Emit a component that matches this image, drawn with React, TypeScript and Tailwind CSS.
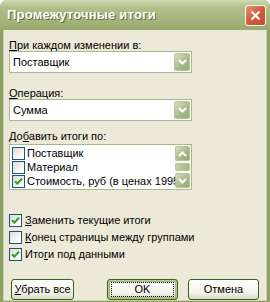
import React from 'react';

const font = "font-['Liberation_Sans',Arial,sans-serif]";

function Tick() {
  return (
    <svg width="9" height="9" viewBox="0 0 9 9" className="block">
      <path d="M1 4.2 L3.4 6.6 L8 1.6" fill="none" stroke="#21a121" strokeWidth="2" />
    </svg>
  );
}

function CheckBox({ checked }: { checked?: boolean }) {
  return (
    <div className="w-[13px] h-[13px] shrink-0 border border-[#1c5180] bg-[linear-gradient(135deg,#dcdad2,#f6f5f0_60%,#ffffff)] flex items-center justify-center">
      {checked && <Tick />}
    </div>
  );
}

function Chevron({ up }: { up?: boolean }) {
  return (
    <svg width="9" height="6" viewBox="0 0 9 6" className="block">
      <path
        d={up ? 'M1 5 L4.5 1.5 L8 5' : 'M1 1 L4.5 4.5 L8 1'}
        fill="none"
        stroke="#ffffff"
        strokeWidth="2"
      />
    </svg>
  );
}

function OliveButton({ up, className }: { up?: boolean; className: string }) {
  return (
    <div
      className={
        'flex items-center justify-center rounded-[2px] border border-[#b5c49a] bg-[linear-gradient(135deg,#d3dcbd,#a9b98a_60%,#93a672)] ' +
        className
      }
    >
      <Chevron up={up} />
    </div>
  );
}

function Combo({ value }: { value: string }) {
  return (
    <div className="w-[183px] h-[22px] border border-[#a6b98c] bg-white flex items-center pl-[3px] pr-[1px]">
      <span className="flex-1 text-[11px] text-black">{value}</span>
      <OliveButton className="w-[16px] h-[18px]" />
    </div>
  );
}

function ListRow({ label, checked }: { label: string; checked?: boolean }) {
  return (
    <div className="h-[14px] flex items-center gap-[2px] pl-[2px] whitespace-nowrap">
      <CheckBox checked={checked} />
      <span className="text-[11px] text-black leading-[13px]">{label}</span>
    </div>
  );
}

function Option({ children, checked }: { children: React.ReactNode; checked?: boolean }) {
  return (
    <div className="h-[17px] flex items-center gap-[3px]">
      <CheckBox checked={checked} />
      <span className="text-[11px] text-black">{children}</span>
    </div>
  );
}

function XpButton({ children, isDefault, className }: { children: React.ReactNode; isDefault?: boolean; className: string }) {
  return (
    <div
      className={
        'h-[21px] rounded-[3px] border border-[#37621c] bg-[linear-gradient(to_bottom,#ffffff,#f3f2ea_70%,#d8d5c4)] flex items-center justify-center text-[11px] text-black ' +
        (isDefault ? 'shadow-[inset_0_0_0_1px_#b8cb8c,inset_0_0_0_2px_#a4b978] ' : '') +
        className
      }
    >
      {isDefault ? (
        <div className="w-[calc(100%-6px)] h-[15px] border border-dotted border-black flex items-center justify-center">
          {children}
        </div>
      ) : (
        children
      )}
    </div>
  );
}

export default function App() {
  return (
    <div className={'w-[270px] h-[302px] flex flex-col rounded-t-[7px] overflow-hidden bg-[#8ea064] ' + font}>
      {/* Title bar */}
      <div className="h-[30px] shrink-0 flex items-center justify-between pl-[7px] pr-[4px] bg-[linear-gradient(to_bottom,#d0dab2,#b1bf8a_25%,#a3b379_70%,#98aa6c)]">
        <span className="text-[13px] font-bold text-white tracking-[0.2px] [text-shadow:1px_1px_0_#5f6f3d]">
          Промежуточные итоги
        </span>
        <div className="w-[21px] h-[21px] rounded-[3px] border border-white bg-[linear-gradient(135deg,#e5937a,#d6603d_45%,#c2482a)] flex items-center justify-center">
          <svg width="11" height="11" viewBox="0 0 11 11">
            <path d="M1.5 1.5 L9.5 9.5 M9.5 1.5 L1.5 9.5" stroke="#ffffff" strokeWidth="2.2" />
          </svg>
        </div>
      </div>

      {/* Body */}
      <div className="flex-1 mx-[3px] mb-[3px] bg-[#ece9d8] border-l border-r border-b border-[#c9d4ab] pl-[5px] pt-[9px] flex flex-col">
        <div className="text-[11px] text-black leading-[13px]">
          <u>П</u>ри каждом изменении в:
        </div>
        <div className="mt-[-1px]">
          <Combo value="Поставщик" />
        </div>

        <div className="mt-[14px] text-[11px] text-black leading-[13px]">
          <u>О</u>перация:
        </div>
        <div className="mt-[-1px]">
          <Combo value="Сумма" />
        </div>

        <div className="mt-[9px] text-[11px] text-black leading-[13px]">
          До<u>б</u>авить итоги по:
        </div>
        <div className="mt-[1px] w-[183px] h-[46px] border border-[#a6b98c] bg-white flex">
          <div className="flex-1 overflow-hidden pt-[1px]">
            <ListRow label="Поставщик" />
            <ListRow label="Материал" />
            <ListRow label="Стоимость, руб (в ценах 1995 г.)" checked />
          </div>
          <div className="w-[16px] flex flex-col bg-[#f7f6ef] py-[1px] pr-[1px]">
            <OliveButton up className="h-[15px]" />
            <div className="mt-[2px] h-[8px] rounded-[2px] border border-[#b5c49a] bg-[linear-gradient(to_right,#c4cfa8,#a4b583)]" />
            <div className="flex-1" />
            <OliveButton className="h-[15px]" />
          </div>
        </div>

        <div className="mt-[22px] flex flex-col">
          <Option checked>
            <u>З</u>аменить текущие итоги
          </Option>
          <Option>
            <u>К</u>онец страницы между группами
          </Option>
          <Option checked>
            Ито<u>г</u>и под данными
          </Option>
        </div>

        <div className="mt-[16px] flex">
          <XpButton className="w-[63px] ml-[2px]">
            <span>
              <u>У</u>брать все
            </span>
          </XpButton>
          <XpButton isDefault className="w-[71px] ml-[33px]">
            OK
          </XpButton>
          <XpButton className="w-[71px] ml-[10px]">Отмена</XpButton>
        </div>
      </div>
    </div>
  );
}
